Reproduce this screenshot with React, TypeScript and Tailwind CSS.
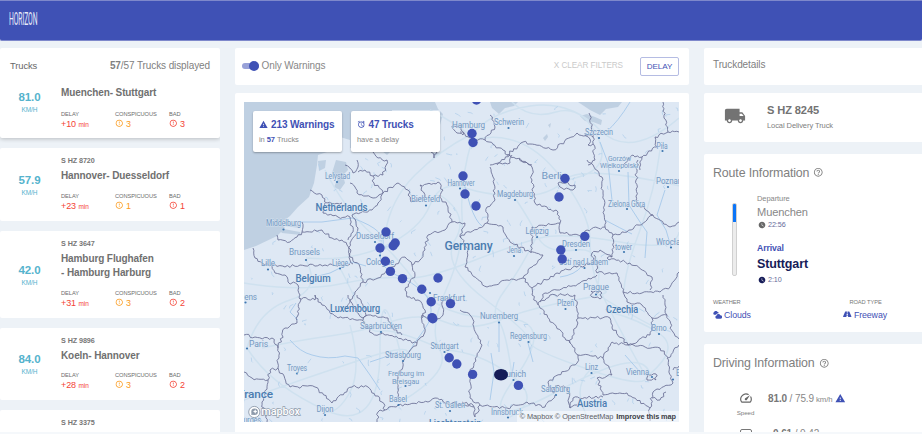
import React from 'react';
import { MdErrorOutline, MdWarning, MdAlarm, MdLocalShipping, MdHelpOutline, MdWatchLater, MdSpeed } from 'react-icons/md';
import { FaRoad } from 'react-icons/fa';

type Pt = [number, number];

const trucks = [
  { plate: 'S HZ 8720', speed: '57.9', route: ['Hannover- Duesseldorf'], delay: 23, conspicuous: 1, bad: 1 },
  { plate: 'S HZ 3647', speed: '42.0', route: ['Hamburg Flughafen', '- Hamburg Harburg'], delay: 31, conspicuous: 3, bad: 2 },
  { plate: 'S HZ 9896', speed: '84.0', route: ['Koeln- Hannover'], delay: 28, conspicuous: 3, bad: 2 },
];

/* ---------- map data ---------- */

const borders: string[] = [
  '387,160 383,175 373,176 374,183 383,193 378,203 372,210 365,212 352,215',
  '345,165 353,173 358,167 357,160',
  '358,172 365,170 373,176',
  '350,183 355,187 357,193 373,198 383,193',
  '383,193 398,183 408,190 411,202 425,197 420,185 438,182 443,190 440,197 448,207 452,222 445,230 428,235 425,250 420,260 412,265',
  '253,248 255,258 262,263 272,265 285,267 300,265 325,265 350,264',
  '277,235 278,240 290,242 297,237 302,232 322,230 332,238 342,240 347,245 350,260 353,264',
  '310,190 322,195 327,203 342,203',
  '325,203 323,213 338,217 350,217 353,232 348,240',
  '352,215 358,228 350,243 350,257 360,267 363,282 355,292 350,300 348,308',
  '302,232 302,222',
  '272,266 275,273 285,275 288,282 298,285 300,295 297,323 285,328 278,348 278,368 290,387 315,387 332,403 352,387 368,387 382,402 385,410 398,405 428,402 435,398 448,403 465,405 474,407',
  '299,298 315,300 315,295 322,305 338,318 362,320 372,333 385,335 417,343',
  '348,295 358,313 363,318 368,315 388,318 392,328 402,335',
  '357,295 367,310 363,320',
  '363,282 378,278 392,267 405,257 412,265 415,275 405,290 407,297 418,300 425,310 422,318',
  '417,343 405,358 398,378 398,402',
  '417,343 425,332 422,315 432,323 443,315 442,302 450,298',
  '244,335 255,337 272,338 278,348',
  '244,372 252,378 268,380 270,370 278,368',
  '268,380 262,402 267,422',
  '385,410 378,412 377,422',
  '490,167 493,177 495,200 487,207 487,223 460,237',
  '490,165 510,163 512,155',
  '519,158 532,167 532,180 535,203 558,212 560,223 532,227 531,253',
  '487,223 503,227 510,242 530,252 543,255 532,267 523,278',
  '587,160 602,177 603,193 605,227 613,235 612,257 607,258',
  '560,223 560,233 583,235 587,230 605,227',
  '612,257 600,250 592,253 594,263 577,267 557,273 532,288 523,278',
  '638,160 636,180 637,203 653,215 647,220 627,232 613,235',
  '653,215 670,227 679,222',
  '607,258 630,263 652,277 650,290',
  '597,273 617,273 623,292 642,293 660,292 670,287 679,272',
  '597,273 597,263 594,255',
  '597,275 580,283 557,290 545,293 538,305',
  '460,237 468,250 465,267 487,287 507,280 523,278',
  '452,222 465,223 460,237',
  '532,288 532,295 540,308 570,343 578,355 577,363 548,382 554,393 556,386 568,388 570,408 577,405',
  '540,302 550,295 575,295 578,318 570,343',
  '578,318 610,318 612,328 628,345 650,335 652,318 642,305 627,302 623,292',
  '578,355 603,358 612,342 628,345 660,348 668,358 679,345',
  '603,358 612,375 597,378 603,395 627,393 650,408 653,392 673,383 667,358',
  '460,310 470,315 482,345 470,372 470,398 480,405 507,408 527,402 545,407 555,395',
  '462,402 473,405 475,417 480,405',
  '652,318 667,315 663,295',
  '667,315 673,332 679,339',
  '603,397 573,398 570,408',
  '650,408 650,421',
  '490,115 495,127 485,140 503,150 507,155 523,142 553,150 577,133 593,137 595,160 588,165',
  '460,132 470,138 485,140',
  '507,155 532,165',
  '497,165 510,155',
  '589,113 593,137',
  '663,102 664,118 668,132 679,132',
  '668,132 655,137 657,147 642,157 633,155 623,165',
  '642,157 640,170',
  '373,152 378,158 387,160',
  '438,148 434,158 431,152',
  '452,126 462,125 463,135 457,133 452,126',
  '560,182 575,185 573,190 562,188 558,183 560,182',
  '591,291 602,293 600,299 592,297 591,291',
  '647,374 656,374 656,380 647,380 647,374',
  '585,133 590,139 588,145 593,144',
  '666,392 660,400 652,398',
  '673,370 679,366',
];

const roads: string[] = [
  'M244 283 Q300 292 340 284 T402 278 T470 262 T540 238 T620 242 T679 232',
  'M262 348 Q300 340 330 336 T390 322 T445 322 T500 320 T575 300 T600 290 T660 330',
  'M472 140 Q460 180 462 215 T446 290 T440 350 T404 400',
  'M472 140 Q520 128 555 170 T590 240 T600 290 T645 375',
  'M306 258 Q350 262 385 246 T430 205 T465 188 T520 196 T565 180 T680 186',
  'M325 170 Q345 210 372 234 T420 288 T500 318 T515 378 T560 390 T650 378',
  'M440 195 Q470 215 455 240 T486 300 T530 342 T590 370 T646 374',
  'M247 348 Q270 385 325 410 T380 350 T402 360',
  'M247 348 Q258 310 290 300 T306 260',
  'M350 325 Q362 370 350 392 T325 412',
  'M445 350 Q480 352 512 376 T508 418',
  'M537 236 Q520 270 505 290 T498 320 T512 376',
  'M512 102 Q530 120 556 112 T598 138 T566 180',
  'M430 110 Q450 120 470 135 Q440 150 415 175 T385 235',
  'M470 136 Q490 112 530 106 T600 130 T679 118',
  'M515 198 Q530 220 538 237 T576 250 T597 290',
  'M590 370 Q570 390 590 421',
  'M610 312 Q640 320 660 334 T650 374',
  'M244 400 Q300 380 360 360 T404 358',
  'M660 150 Q655 190 640 230 T624 290',
  'M340 268 Q352 290 360 312 T381 331 T444 350',
];

const rivers: string[] = [
  'M405 358 Q414 343 424 330 T430 303 T400 277 T382 248 T352 218 L322 222 L300 222',
  'M312 355 Q328 360 345 356 L358 358 L370 375 L380 390',
  'M290 340 Q300 352 312 355',
  'M298 320 L290 312 L296 303',
  'M630 102 Q618 122 606 132 M600 142 L608 163 L612 200',
  'M628 172 L629 205 L640 222 L647 232 L645 258',
  'M665 190 L657 215 L666 230 L671 247',
  'M463 180 L470 205 Q476 222 482 226',
  'M605 220 Q620 228 632 234',
  'M499 322 L499 352 M491 353 L494 372 L490 400 M512 375 L514 362',
  'M528 343 L533 362',
  'M560 277 Q575 275 582 266',
  'M370 362 L385 357 L398 352',
  'M340 268 L330 273 L318 276 M340 268 L352 262 L366 266',
  'M640 372 L625 355',
];

const sea: string[] = [
  'M244 102 H435 L438 109 L443 114 L440 125 L440 152 L436 157 L431 151 L392 150 L387 155 L382 151 L350 148 L345 139 L334 147 L327 152 L318 155 L317 165 L314 183 L309 197 L298 207 L290 216 L281 223 L285 228 L277 236 L256 246 L244 250 Z',
  'M490 102 H518 L514 106 L505 108 L499 114 L492 108 Z',
  'M578 102 H622 L618 107 L606 109 L600 115 L590 110 Z',
  'M580 116 L587 114 L595 117 L602 120 L601 125 L593 122 L585 121 Z',
  'M336 160 L346 162 L348 170 L343 175 L345 183 L340 190 L334 187 L338 178 L332 173 Z',
  'M318 161 L326 160 L325 168 L319 171 Z',
  'M278 228 L300 232 L301 235 L282 233 Z',
  'M284 221 L298 225 L300 228 L284 226 Z',
  'M543 138 L547 134 L548 137 L545 141 Z',
  'M548 125 L551 123 L550 128 Z',
];

/* Land that lies between the two badges in the upper left corner. */
const coast = 'M392 152 L392 110 L440 110 L440 153 Z M350 140 L340 137 L330 146 L350 150 Z';

const labels: { t: string; x: number; y: number; w: number; s?: number; big?: boolean; dot?: Pt }[] = [
  { t: 'Hamburg', x: 452, y: 128, w: 33 },
  { t: 'Schwerin', x: 494, y: 125, w: 30, dot: [508.5, 128] },
  { t: 'Szczecin', x: 585, y: 134.5, w: 28, dot: [599, 138] },
  { t: 'Piła', x: 656.5, y: 148.5, w: 11, dot: [662.5, 151] },
  { t: 'Gorzów', x: 608, y: 160.5, w: 23, s: 7.6 },
  { t: 'Wielkopolski', x: 600, y: 168, w: 38, s: 7.6, dot: [619, 171] },
  { t: 'Lelystad', x: 325, y: 178.5, w: 25, dot: [337, 182] },
  { t: 'Bielefeld', x: 411, y: 202, w: 29, dot: [426, 205.5] },
  { t: 'Hannover', x: 447.5, y: 185.5, w: 27, dot: [460, 188.5] },
  { t: 'Netherlands', x: 315.5, y: 211, w: 52, big: true },
  { t: 'Middelburg', x: 266, y: 226, w: 35, dot: [283.5, 229.5] },
  { t: 'Dusseldorf', x: 356, y: 238.5, w: 38, dot: [375, 242] },
  { t: 'Brussels', x: 289, y: 255, w: 31, dot: [306, 260] },
  { t: 'Cologne', x: 366, y: 265, w: 28, dot: [380, 255.5] },
  { t: 'Lille', x: 261, y: 266, w: 14, dot: [268, 269.5] },
  { t: 'Liège', x: 332, y: 266, w: 16, dot: [340, 268.5] },
  { t: 'Germany', x: 444.5, y: 250, w: 48, big: true, s: 12 },
  { t: 'Belgium', x: 295.5, y: 281.5, w: 35, big: true },
  { t: 'Amiens', x: 230, y: 299.5, w: 27, dot: [245.5, 302.5] },
  { t: 'Frankfurt', x: 433, y: 300.5, w: 32, dot: [430, 293] },
  { t: 'Magdeburg', x: 497, y: 197, w: 36, dot: [515, 200] },
  { t: 'Berlin', x: 541.5, y: 179, w: 26, s: 9 },
  { t: 'Zielona Góra', x: 608, y: 206.5, w: 37, dot: [627, 209] },
  { t: 'Poznań', x: 656, y: 184, w: 26, dot: [668, 187] },
  { t: 'Leipzig', x: 525.5, y: 233.5, w: 23, dot: [537, 237] },
  { t: 'Jena', x: 507, y: 253, w: 14, dot: [514, 256] },
  { t: 'Dresden', x: 562, y: 247, w: 28, dot: [576, 250] },
  { t: 'tower', x: 615, y: 249.5, w: 17, dot: [624, 252] },
  { t: 'Wrocław', x: 656, y: 244.5, w: 30, dot: [671, 247.5] },
  { t: 'Ústí nad Labem', x: 559, y: 265, w: 49, dot: [584.5, 268] },
  { t: 'Prague', x: 583, y: 290, w: 26, s: 9, dot: [596, 294.5] },
  { t: 'Luxembourg', x: 330, y: 311.5, w: 50, big: true },
  { t: 'Saarbrücken', x: 360, y: 329, w: 42, dot: [381, 332] },
  { t: 'Paris', x: 249, y: 346.5, w: 19, s: 9, dot: [247, 348.5] },
  { t: 'Strasbourg', x: 385, y: 357.5, w: 36, dot: [403, 361] },
  { t: 'Stuttgart', x: 430.5, y: 349, w: 28, dot: [444.5, 352] },
  { t: 'Troyes', x: 287, y: 370.5, w: 20, dot: [297, 373.5] },
  { t: 'Freiburg im', x: 388, y: 375.5, w: 36, s: 7.9 },
  { t: 'Breisgau', x: 392, y: 383.5, w: 27, s: 7.9, dot: [405.5, 386] },
  { t: 'France', x: 238, y: 397.5, w: 35, big: true, s: 11 },
  { t: 'Dijon', x: 316.5, y: 412, w: 17, dot: [325, 415] },
  { t: 'Basel', x: 389, y: 402, w: 18, dot: [398.5, 405] },
  { t: 'St. Gallen', x: 435, y: 408, w: 30, dot: [450, 411] },
  { t: 'Bourges', x: 235, y: 423, w: 26 },
  { t: 'Liechtenstein', x: 429, y: 425.5, w: 52, big: true, s: 9.5 },
  { t: 'Plzeň', x: 557, y: 305.5, w: 17, dot: [565.5, 309] },
  { t: 'Nuremberg', x: 480, y: 319, w: 38, dot: [499, 322.5] },
  { t: 'Regensburg', x: 510, y: 338.5, w: 37, dot: [528.5, 342] },
  { t: 'Czechia', x: 606, y: 312.5, w: 32, big: true },
  { t: 'Brno', x: 651.5, y: 331, w: 15, dot: [659, 334] },
  { t: 'Linz', x: 585, y: 369.5, w: 13, dot: [591.5, 373] },
  { t: 'Munich', x: 499, y: 376.5, w: 27, dot: [513.5, 380] },
  { t: 'Vienna', x: 626, y: 374.5, w: 23, s: 9, dot: [652, 377] },
  { t: 'Salzburg', x: 541, y: 391.5, w: 29, dot: [556, 395] },
  { t: 'Austria', x: 577, y: 406.5, w: 30, big: true },
  { t: 'Innsbruck', x: 491, y: 414.5, w: 32, dot: [508, 417.5] },
  { t: 'Bratislava', x: 676, y: 376, w: 33, dot: [673, 379.5] },
];

const markers: Pt[] = [
  [476.5, 100], [472, 133.5], [473, 142.5], [463, 176], [465, 194], [476, 206], [565, 178.5], [559, 197],
  [584.8, 236.4], [560.8, 250], [562.2, 259], [386, 232], [380, 248], [395.2, 243], [393.2, 245.8], [385.4, 261.2],
  [390.4, 271.4], [402.5, 278.6], [438, 278], [421.8, 289.2], [431.2, 301.8], [450.5, 303.6], [432, 317.6],
  [432.8, 318.8], [449.2, 357.8], [456.8, 364], [472.6, 374.4], [518.4, 385.4],
];

/* Deterministic generator keeps the terrain identical on every render. */
function rng(seed: number) {
  let s = seed;
  return () => {
    s = (s * 16807) % 2147483647;
    return s / 2147483647;
  };
}

function roughPath(src: string, seed: number) {
  const pts = src.split(' ').map((p) => p.split(',').map(Number) as Pt);
  const rand = rng(seed * 7919 + 13);
  let d = `M${pts[0][0]} ${pts[0][1]}`;
  for (let i = 1; i < pts.length; i++) {
    const [ax, ay] = pts[i - 1];
    const [bx, by] = pts[i];
    const len = Math.hypot(bx - ax, by - ay);
    const n = Math.max(1, Math.round(len / 2.4));
    for (let k = 1; k < n; k++) {
      const t = k / n;
      const o = (rand() - 0.5) * 3;
      d += `L${(ax + (bx - ax) * t - ((by - ay) / len) * o).toFixed(1)} ${(ay + (by - ay) * t + ((bx - ax) / len) * o).toFixed(1)}`;
    }
    d += `L${bx} ${by}`;
  }
  return d;
}

const borderPath = borders.map((b, i) => roughPath(b, i + 1)).join('');

const streams = (() => {
  const rand = rng(4242);
  let d = '';
  for (let i = 0; i < 230; i++) {
    const x = 244 + rand() * 435;
    const y = 104 + rand() * 318;
    if (x < 318 && y < 250 - (x - 244) * 0.35) continue;
    if (y < 153 && x < 440) continue;
    const a = rand() * 3.2;
    const l = 1 + rand() * 4;
    d += `M${x.toFixed(1)} ${y.toFixed(1)}l${(Math.cos(a) * l).toFixed(1)} ${(Math.sin(a) * l).toFixed(1)}l${(rand() * 3 - 1).toFixed(1)} ${(rand() * 3).toFixed(1)}`;
  }
  return d;
})();

function MapCanvas() {
  return (
    <svg className="block h-full w-full" viewBox="244 102 435 320" preserveAspectRatio="none">
      <rect x="244" y="102" width="435" height="321" fill="#dee8f4" />
      <path d={sea.join('')} fill="#bfd0e2" />
      <path d={coast} fill="#dee8f4" />
      <path d={roads.join('')} fill="none" stroke="#cfe1ef" strokeWidth="1.5" />
      <path d={streams} fill="none" stroke="#b4d0eb" strokeWidth="0.8" />
      <path d={rivers.join('')} fill="none" stroke="#a6c8ea" strokeWidth="0.9" />
      <path d={borderPath} fill="none" stroke="#686d93" strokeWidth="0.85" strokeLinejoin="round" />
      {labels.map((l) => (
        <g key={l.t}>
          {l.dot && <circle cx={l.dot[0]} cy={l.dot[1]} r="1.1" fill="#3f77b0" />}
          <text
            x={l.x}
            y={l.y}
            textLength={l.w}
            lengthAdjust="spacingAndGlyphs"
            fontFamily="Roboto, sans-serif"
            fontSize={l.s ?? (l.big ? 10.2 : 8.2)}
            fontWeight={l.big ? 500 : 400}
            fill={l.big ? '#4a7cb0' : '#7398c2'}
            stroke="#dee8f4"
            strokeOpacity="0.7"
            strokeWidth="1.2"
            paintOrder="stroke"
          >
            {l.t}
          </text>
        </g>
      ))}
      {markers.map(([x, y], i) => (
        <circle key={i} cx={x} cy={y} r="4.7" fill="#3f51b5" />
      ))}
      <ellipse cx="501" cy="374.7" rx="7" ry="5.8" fill="#161c58" />
      <g>
        <circle cx="254.3" cy="412" r="5.6" fill="#fff" stroke="#8f9bab" strokeWidth="0.9" />
        <circle cx="254.6" cy="411.8" r="3.3" fill="#8f9bab" />
        <path d="M255.2 409.3l.7 1.5 1.5.7-1.5.7-.7 1.5-.7-1.5-1.5-.7 1.5-.7z" fill="#fff" />
        <path d="M251.2 415l.8-3 2 2.4z" fill="#8f9bab" />
        <text x="261.3" y="415.2" textLength="38.5" lengthAdjust="spacingAndGlyphs" fontFamily="Roboto, sans-serif" fontWeight="500" fontSize="10.5" fill="#fff" stroke="#8f9bab" strokeWidth="1.3" paintOrder="stroke">
          mapbox
        </text>
      </g>
    </svg>
  );
}

/* ---------- truck list ---------- */

function Stat({ label, className, children }: { label: string; className: string; children: React.ReactNode }) {
  return (
    <div className={className}>
      <div className="text-[5.7px] leading-[7px] text-[#6c6c6c]">{label}</div>
      {children}
    </div>
  );
}

function TruckStats({ delay, conspicuous, bad }: { delay: number; conspicuous: number; bad: number }) {
  return (
    <div className="flex whitespace-nowrap">
      <Stat label="DELAY" className="w-[54px]">
        <div className="text-[9px] leading-[13px] text-[#f44336]">
          +{delay} <span className="text-[6.5px]">min</span>
        </div>
      </Stat>
      <Stat label="CONSPICUOUS" className="w-[54px]">
        <div className="flex items-center text-[9px] leading-[13px] text-[#fb9a1c]">
          <MdErrorOutline className="-mt-0.5 mr-[2.5px] size-[8.5px]" />
          {conspicuous}
        </div>
      </Stat>
      <Stat label="BAD" className="w-10">
        <div className="flex items-center text-[9px] leading-[13px] text-[#f44336]">
          <MdErrorOutline className="-mt-0.5 mr-[2.5px] size-[8.5px]" />
          {bad}
        </div>
      </Stat>
    </div>
  );
}

function Speed({ value }: { value: string }) {
  return (
    <div className="flex w-[61px] shrink-0 flex-col items-center pr-[2px] text-[#55b3cd]">
      <div className="text-[11.5px] font-bold leading-[13px]">{value}</div>
      <div className="text-[6.5px] leading-[11px]">KM/H</div>
    </div>
  );
}

function TruckCard({ t }: { t: (typeof trucks)[number] }) {
  return (
    <div className={`mb-[10px] flex shrink-0 items-center rounded-[2px] bg-white ${t.route.length > 1 ? 'h-[87px]' : 'h-[72.5px]'}`}>
      <div className="pt-[3px]">
        <Speed value={t.speed} />
      </div>
      <div className="h-full pt-[8px]">
        <div className="text-[7.2px] font-bold leading-[9px] text-[#777]">{t.plate}</div>
        <div className="mb-[9px] mt-[4px] text-[10px] font-bold leading-[14.5px] text-[#707070]">
          {t.route.map((r) => (
            <div key={r}>{r}</div>
          ))}
        </div>
        <TruckStats delay={t.delay} conspicuous={t.conspicuous} bad={t.bad} />
      </div>
    </div>
  );
}

function Sidebar() {
  return (
    <aside className="flex w-[220px] shrink-0 flex-col overflow-hidden">
      <div className="z-10 flex h-[37px] shrink-0 items-start justify-between rounded-t-[2px] bg-white px-[10px] pt-[11px] leading-[13px] text-[#808080]">
        <div className="text-[9.4px] text-[#686868]">Trucks</div>
        <div className="text-[10px]">
          <b>57</b>/57 Trucks displayed
        </div>
      </div>
      <div className="mb-[10px] flex h-[53px] shrink-0 rounded-b-[2px] bg-white pt-[1px] shadow-[0_1px_4px_rgba(0,0,0,0.22)]">
        <div className="pt-[5px]">
          <Speed value="81.0" />
        </div>
        <div>
          <div className="mb-[10px] text-[10px] font-bold leading-[14.5px] text-[#707070]">Muenchen- Stuttgart</div>
          <TruckStats delay={10} conspicuous={3} bad={3} />
        </div>
      </div>
      {trucks.map((t) => (
        <TruckCard key={t.plate} t={t} />
      ))}
      <div className="h-[40px] shrink-0 rounded-t-[2px] bg-white pl-[61px] pt-[8px] text-[7.2px] font-bold leading-[9px] text-[#777]">S HZ 3375</div>
    </aside>
  );
}

/* ---------- centre ---------- */

function Center() {
  return (
    <main className="flex w-[454px] shrink-0 flex-col gap-[8px]">
      <div className="flex h-[37px] shrink-0 items-center rounded-[2px] bg-white pl-[7px] pr-[10px]">
        <div className="mb-[2px] flex h-[6px] w-[17px] items-center justify-end rounded-full bg-[#98a1d8]">
          <div className="size-[10px] shrink-0 rounded-full bg-[#3f51b5]" />
        </div>
        <div className="mb-[2px] ml-[2.5px] text-[10px] leading-[13px] text-[#888]">Only Warnings</div>
        <div className="ml-auto mr-[17px] text-[8.2px] text-[#cacaca]">X CLEAR FILTERS</div>
        <button className="h-[19px] w-[39px] rounded-[2px] border border-[#b5bce3] text-[8.1px] leading-[17px] text-[#4353b6]">DELAY</button>
      </div>
      <div className="flex-1 rounded-t-[2px] bg-white px-[9px] pb-[10px] pt-[9px]">
        <div className="relative h-full w-[435px] overflow-hidden">
          <MapCanvas />
          <div className="absolute left-[9px] top-[9px] flex gap-[9px]">
            <MapBadge icon={<MdWarning className="size-[9px]" />} title="213 Warnings">
              in <b className="text-[#3f51b5]">57</b> Trucks
            </MapBadge>
            <MapBadge icon={<MdAlarm className="size-[8.5px]" />} title="47 Trucks">
              have a delay
            </MapBadge>
          </div>
          <div className="absolute bottom-0 right-0 whitespace-nowrap bg-white/50 pl-[3px] pr-[3px] text-[7.4px] leading-[11px] text-[#5c6066]">
            © Mapbox © OpenStreetMap <b className="ml-px text-[7.35px] text-[#3c4046]">Improve this map</b>
          </div>
        </div>
      </div>
    </main>
  );
}

function MapBadge({ icon, title, children }: { icon: React.ReactNode; title: string; children: React.ReactNode }) {
  return (
    <div className="h-[40.5px] w-[89px] whitespace-nowrap rounded-[2px] bg-white pl-[6px] pt-[6.5px] shadow-[0_1px_2px_rgba(0,0,0,0.3)]">
      <div className="flex items-center gap-[3px] text-[10px] font-bold leading-[13px] text-[#3f51b5]">
        {icon}
        {title}
      </div>
      <div className="mt-[4px] text-[7.55px] leading-[10px] text-[#888]">{children}</div>
    </div>
  );
}

/* ---------- details ---------- */

function SectionTitle({ children }: { children: React.ReactNode }) {
  return (
    <div className="flex items-center gap-[4px] text-[12.4px] leading-[16px] text-[#808080]">
      {children}
      <MdHelpOutline className="size-[10.5px]" />
    </div>
  );
}

function CloudsIcon() {
  return (
    <svg className="h-[8px] w-[9px]" viewBox="0 0 18 16" fill="currentColor">
      <path d="M3 7.500a3 3 0 0 1-.6-5.700A3.600 3.600 0 0 1 8.700 1.500 3 3 0 0 1 11.500 4.500 5 5 0 0 0 6 7.500z" />
      <path d="M7.500 15.500a3.400 3.400 0 0 1-.3-6.600 4 4 0 0 1 7.400-.4 3.500 3.500 0 0 1 .1 7z" />
    </svg>
  );
}

function Details() {
  return (
    <aside className="flex w-[218px] shrink-0 flex-col overflow-hidden whitespace-nowrap">
      <div className="mb-[8px] h-[37px] shrink-0 rounded-l-[2px] bg-white pl-[9px] pt-[9.5px] text-[10px] leading-[13px] text-[#808080]">Truckdetails</div>
      <div className="mb-[12px] flex h-[48.5px] shrink-0 rounded-l-[2px] bg-white pl-[20px] pt-[9.5px]">
        <MdLocalShipping className="mt-[2px] size-[22px] text-[#737373]" />
        <div className="ml-[21px]">
          <div className="text-[11.1px] font-bold leading-[14px] text-[#737373]">S HZ 8245</div>
          <div className="mt-[4px] text-[7.5px] leading-[10px] text-[#808080]">Local Delivery Truck</div>
        </div>
      </div>
      <div className="mb-[11.5px] h-[178.5px] shrink-0 rounded-l-[2px] bg-white pl-[9px] pt-[11px]">
        <SectionTitle>Route Information</SectionTitle>
        <div className="mt-[13px] flex">
          <div className="ml-[19px] mt-[9px] h-[73px] w-[5px] overflow-hidden rounded-[2px] border border-[#d0d0d0] bg-[#ececec]">
            <div className="-mx-px -mt-px h-[19px] bg-[#0b75f8]" />
          </div>
          <div className="ml-[20px]">
            <div className="text-[7.5px] leading-[10px] text-[#888]">Departure</div>
            <div className="mt-px text-[11.1px] leading-[14px] text-[#888]">Muenchen</div>
            <div className="flex items-center gap-[2px] text-[7.2px] leading-[12px] text-[#666a9a]">
              <MdWatchLater className="ml-px size-[8px] text-[#666]" />
              22:56
            </div>
            <div className="mt-[11.5px] text-[8.7px] font-bold leading-[12px] text-[#3f51b5]">Arrival</div>
            <div className="mt-[2px] text-[12.5px] font-bold leading-[17px] text-[#161c58]">Stuttgart</div>
            <div className="mt-px flex items-center gap-[2px] text-[7.2px] leading-[12px] text-[#666a9a]">
              <MdWatchLater className="ml-px size-[8px] text-[#161c58]" />
              2:10
            </div>
          </div>
        </div>
        <div className="mt-[11.5px] flex justify-between pr-[35px]">
          <div>
            <div className="text-[5.7px] leading-[8px] text-[#777]">WEATHER</div>
            <div className="mt-[3px] flex items-center gap-[2px] text-[8.8px] leading-[12px] text-[#3f51b5]">
              <CloudsIcon />
              Clouds
            </div>
          </div>
          <div>
            <div className="ml-[6px] text-[5.7px] leading-[8px] text-[#777]">ROAD TYPE</div>
            <div className="mt-[3px] flex items-center gap-[2px] text-[8.8px] leading-[12px] text-[#3f51b5]">
              <FaRoad className="size-[8.5px]" />
              Freeway
            </div>
          </div>
        </div>
      </div>
      <div className="h-[100px] shrink-0 rounded-l-[2px] bg-white pl-[9px] pt-[11.5px]">
        <SectionTitle>Driving Information</SectionTitle>
        <div className="mt-[20px] flex">
          <div className="flex w-[65px] flex-col items-center text-[#808080]">
            <MdSpeed className="size-[14px] text-[#666]" />
            <div className="mt-[2.5px] text-[6.2px] leading-[9px]">Speed</div>
          </div>
          <div className="ml-[-10px] flex items-baseline leading-[16px] text-[#888]">
            <span className="text-[10px] font-bold text-[#777]">81.0</span>
            <span className="ml-[2.5px] text-[10px]">/ 75.9</span>
            <span className="ml-[2px] text-[7.8px]">km/h</span>
            <MdWarning className="ml-[2px] mt-[2px] size-[10.5px] self-start text-[#3f51b5]" />
          </div>
        </div>
        <div className="mt-[10.5px] flex">
          <div className="flex w-[65px] justify-center pt-[2px]">
            <div className="h-[12px] w-[12px] rounded-[2px] border-[1.5px] border-[#777]" />
          </div>
          <div className="ml-[-5px] text-[10px] leading-[13px] text-[#888]">
            <b className="text-[#777]">0.61</b> / 0.42
          </div>
        </div>
      </div>
    </aside>
  );
}

export default function App() {
  return (
    <div className="flex h-[434px] w-[922px] flex-col overflow-hidden bg-[#edf2f7] font-['Liberation_Sans',Arial,sans-serif] [&_*]:tracking-[-0.01em]">
      <header className="h-[41px] shrink-0 rounded-b-[2px] border-y border-[#7e88cb] bg-[#3f51b5] pl-[9px] pt-[7px]">
        <div className="w-fit origin-left scale-x-[0.365] font-[Roboto,sans-serif] text-[18.5px] leading-[23px] text-[#e6e9f8]">HORIZON</div>
      </header>
      <div className="flex h-[391px] shrink-0 justify-between pt-[7px]">
        <Sidebar />
        <Center />
        <Details />
      </div>
      <div className="flex-1 bg-[#f5f8fb]" />
    </div>
  );
}
